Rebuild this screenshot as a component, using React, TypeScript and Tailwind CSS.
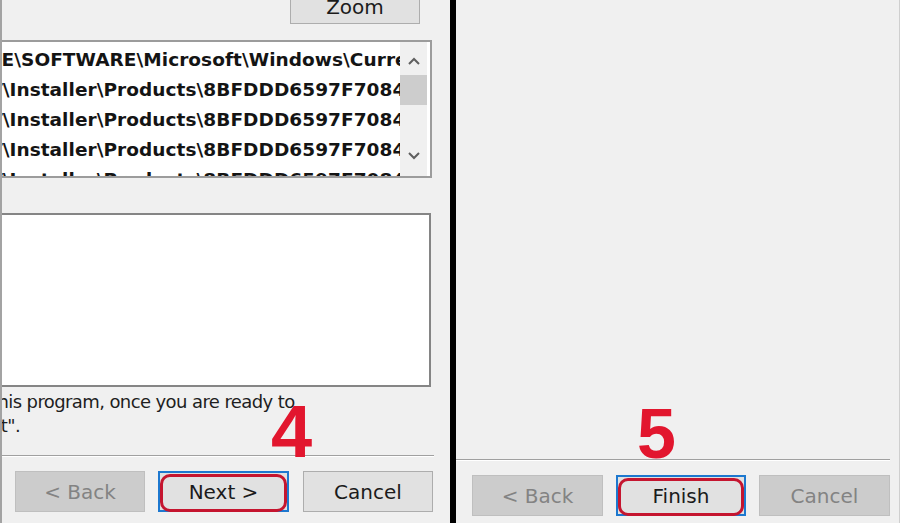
import React from "react";

const ui = { fontFamily: '"DejaVu Sans", Verdana, sans-serif' };
const num = { fontFamily: '"Liberation Sans", Arial, sans-serif' };

function Chevron({ up }: { up?: boolean }) {
  return (
    <svg width="14" height="10" viewBox="0 0 14 10">
      <path
        d={up ? "M2 8 L7 3 L12 8" : "M2 2 L7 7 L12 2"}
        fill="none"
        stroke="#5f5f5f"
        strokeWidth="2"
      />
    </svg>
  );
}

function Btn({
  label,
  disabled,
  focus,
  w,
}: {
  label: string;
  disabled?: boolean;
  focus?: boolean;
  w: string;
}) {
  const base = "relative flex h-[41px] items-center justify-center text-[20px] leading-none";
  if (disabled)
    return (
      <div className={`${base} ${w} border border-[#bfbfbf] bg-[#cccccc] text-[#838383]`} style={ui}>
        {label}
      </div>
    );
  if (focus)
    return (
      <div className={`${base} ${w} border-2 border-[#1d78cf] bg-[#e1e1e1] text-[#1b1b1b]`} style={ui}>
        <div className="absolute left-0 right-0 top-[1px] bottom-[-2px] rounded-[10px] border-[3px] border-[#c5152f]" />
        <span className="relative">{label}</span>
      </div>
    );
  return (
    <div className={`${base} ${w} border border-[#adadad] bg-[#e1e1e1] text-[#1b1b1b]`} style={ui}>
      {label}
    </div>
  );
}

export default function App() {
  const rows = [
    { t: "NE\\SOFTWARE\\Microsoft\\Windows\\CurrentVersion\\Installer", ml: "ml-[-16px]" },
    { t: "T\\Installer\\Products\\8BFDDD6597F7084A", ml: "ml-[-12px]" },
    { t: "T\\Installer\\Products\\8BFDDD6597F7084A", ml: "ml-[-12px]" },
    { t: "T\\Installer\\Products\\8BFDDD6597F7084A", ml: "ml-[-12px]" },
    { t: "T\\Installer\\Products\\8BFDDD6597F7084A", ml: "ml-[-12px]" },
  ];
  return (
    <div className="flex h-[523px] w-[900px] overflow-hidden bg-[#f0f0f0]">
      {/* left dialog */}
      <div className="flex h-full w-[450px]">
        <div className="h-full w-[2px] bg-[#a3a3a3]" />
        <div className="relative flex h-full flex-1 flex-col overflow-hidden">
          <div className="flex justify-end pr-[30px]">
            <div
              className="mt-[-11px] flex h-[35px] w-[130px] items-center justify-center border border-[#adadad] bg-[#e1e1e1] text-[20px] leading-none text-[#1b1b1b]"
              style={ui}
            >
              Zoom
            </div>
          </div>

          {/* list box */}
          <div className="mt-[16px] flex h-[138px] w-[430px] border-y-2 border-r-2 border-[#9c9c9c] bg-white">
            <div className="flex-1 overflow-hidden pt-[3px]">
              {rows.map((r, i) => (
                <div
                  key={i}
                  className={`whitespace-nowrap text-[18.5px] font-bold leading-[30px] tracking-[0.05px] text-[#141414] ${r.ml}`}
                  style={ui}
                >
                  {r.t}
                </div>
              ))}
            </div>
            <div className="flex w-[27px] flex-col bg-[#f0f0f0]">
              <div className="flex h-[33px] items-center justify-center pt-[4px]">
                <Chevron up />
              </div>
              <div className="h-[30px] bg-[#cdcdcd]" />
              <div className="flex-1" />
              <div className="flex h-[36px] items-center justify-center pb-[4px]">
                <Chevron />
              </div>
            </div>
            <div className="w-[3px]" />
          </div>

          {/* text box */}
          <div className="ml-[-4px] mt-[35px] h-[174px] w-[433px] border-2 border-[#858585] bg-white" />

          <div
            className="mt-[3px] text-[18px] leading-[24px] tracking-[-0.6px] text-[#1e1e1e]"
            style={ui}
          >
            <div className="ml-[-11px] whitespace-nowrap">this program, once you are ready to</div>
            <div className="ml-[-42px] whitespace-nowrap">"Next".</div>
          </div>

          <div className="mt-[17px] w-[432px] border-t border-b border-t-[#a0a0a0] border-b-white" />

          <div className="ml-[13px] mt-[14px] flex gap-[13px]">
            <Btn label="< Back" disabled w="w-[130px]" />
            <Btn label="Next >" focus w="w-[131px]" />
            <div className="ml-[1px]">
              <Btn label="Cancel" w="w-[130px]" />
            </div>
          </div>

          <div
            className="absolute left-[269px] top-[395px] text-[74px] font-bold leading-none text-[#e2162e]"
            style={num}
          >
            4
          </div>
        </div>
      </div>

      {/* divider */}
      <div className="h-full w-[6px] bg-black" />

      {/* right dialog */}
      <div className="relative flex h-full flex-1 flex-col border-r border-[#cfcfcf]">
        <div className="mt-[459px] w-[434px] border-t border-b border-t-[#a0a0a0] border-b-white" />
        <div className="ml-[16px] mt-[14px] flex gap-[13px]">
          <Btn label="< Back" disabled w="w-[131px]" />
          <Btn label="Finish" focus w="w-[130px]" />
          <Btn label="Cancel" disabled w="w-[131px]" />
        </div>
        <div
          className="absolute left-[181px] top-[399px] text-[70px] font-bold leading-none text-[#e2162e]"
          style={num}
        >
          5
        </div>
      </div>
    </div>
  );
}
